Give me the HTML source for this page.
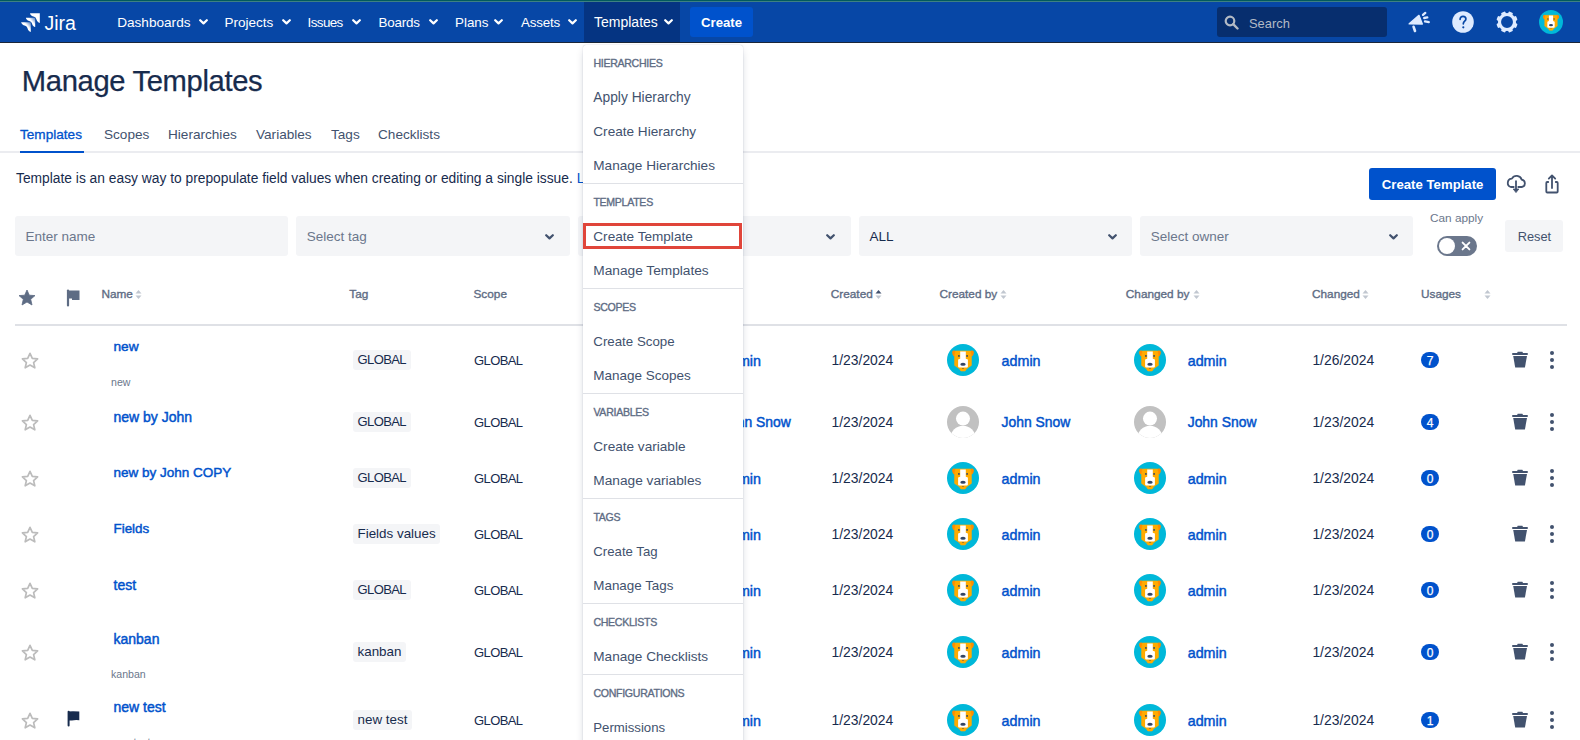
<!DOCTYPE html>
<html><head><meta charset="utf-8"><style>
html,body{margin:0;padding:0;background:#fff;width:1580px;height:740px;overflow:hidden;position:relative}
body{font-family:"Liberation Sans",sans-serif}
.t{position:absolute;white-space:nowrap}
svg{display:block}
</style></head><body>
<div style="position:absolute;left:0px;top:0px;width:1580px;height:1px;background:#025a5e"></div>
<div style="position:absolute;left:0px;top:1px;width:1580px;height:1px;background:#3e8181"></div>
<div style="position:absolute;left:0px;top:2px;width:1580px;height:40px;background:#0747a6"></div>
<div style="position:absolute;left:0px;top:42px;width:1580px;height:1px;background:#1b2638"></div>
<svg style="position:absolute;left:18px;top:8px;" width="30" height="28" viewBox="0 0 30 28"><defs><linearGradient id="lg" x1="1" y1="0" x2="0.35" y2="0.6"><stop offset="0" stop-color="#fff" stop-opacity="0.25"/><stop offset="0.6" stop-color="#fff" stop-opacity="1"/></linearGradient></defs><path d="M12.00,5.20 L21.80,5.20 L21.80,15.00 L20.62,14.61 L19.06,13.04 L18.27,10.88 L17.49,9.51 L16.12,8.73 L13.96,7.94 L12.39,6.38 Z" fill="#fff" stroke-linejoin="round"/><path d="M7.90,9.80 L17.20,9.80 L17.20,19.10 L16.08,18.73 L14.60,17.24 L13.85,15.19 L13.11,13.89 L11.81,13.15 L9.76,12.40 L8.27,10.92 Z" fill="url(#lg)" stroke-linejoin="round"/><path d="M3.10,14.20 L12.80,14.20 L12.80,23.90 L11.64,23.51 L10.08,21.96 L9.31,19.83 L8.53,18.47 L7.17,17.69 L5.04,16.92 L3.49,15.36 Z" fill="url(#lg)" stroke-linejoin="round"/></svg>
<div class="t" style="left:44.5px;top:13.99px;font-size:19.5px;line-height:19.5px;color:#fff;font-weight:400;letter-spacing:0px">Jira</div>
<div style="position:absolute;left:584px;top:2px;width:96px;height:40px;background:#053482"></div>
<div class="t" style="left:117.2px;top:15.69px;font-size:13.6px;line-height:13.6px;color:#fff;font-weight:400;letter-spacing:0px">Dashboards</div>
<svg style="position:absolute;left:199px;top:19px;" width="9" height="6" viewBox="0 0 9 6"><path d="M1.2,1.2 L4.5,4.4 L7.8,1.2" fill="none" stroke="#fff" stroke-width="2.2" stroke-linecap="round" stroke-linejoin="round"/></svg>
<div class="t" style="left:224.5px;top:15.77px;font-size:13.5px;line-height:13.5px;color:#fff;font-weight:400;letter-spacing:0px">Projects</div>
<svg style="position:absolute;left:282px;top:19px;" width="9" height="6" viewBox="0 0 9 6"><path d="M1.2,1.2 L4.5,4.4 L7.8,1.2" fill="none" stroke="#fff" stroke-width="2.2" stroke-linecap="round" stroke-linejoin="round"/></svg>
<div class="t" style="left:307.6px;top:15.86px;font-size:13.4px;line-height:13.4px;color:#fff;font-weight:400;letter-spacing:-0.6px">Issues</div>
<svg style="position:absolute;left:352px;top:19px;" width="9" height="6" viewBox="0 0 9 6"><path d="M1.2,1.2 L4.5,4.4 L7.8,1.2" fill="none" stroke="#fff" stroke-width="2.2" stroke-linecap="round" stroke-linejoin="round"/></svg>
<div class="t" style="left:378.5px;top:15.86px;font-size:13.4px;line-height:13.4px;color:#fff;font-weight:400;letter-spacing:-0.2px">Boards</div>
<svg style="position:absolute;left:429px;top:19px;" width="9" height="6" viewBox="0 0 9 6"><path d="M1.2,1.2 L4.5,4.4 L7.8,1.2" fill="none" stroke="#fff" stroke-width="2.2" stroke-linecap="round" stroke-linejoin="round"/></svg>
<div class="t" style="left:455px;top:15.86px;font-size:13.4px;line-height:13.4px;color:#fff;font-weight:400;letter-spacing:0px">Plans</div>
<svg style="position:absolute;left:494px;top:19px;" width="9" height="6" viewBox="0 0 9 6"><path d="M1.2,1.2 L4.5,4.4 L7.8,1.2" fill="none" stroke="#fff" stroke-width="2.2" stroke-linecap="round" stroke-linejoin="round"/></svg>
<div class="t" style="left:521px;top:15.86px;font-size:13.4px;line-height:13.4px;color:#fff;font-weight:400;letter-spacing:-0.2px">Assets</div>
<svg style="position:absolute;left:568px;top:19px;" width="9" height="6" viewBox="0 0 9 6"><path d="M1.2,1.2 L4.5,4.4 L7.8,1.2" fill="none" stroke="#fff" stroke-width="2.2" stroke-linecap="round" stroke-linejoin="round"/></svg>
<div class="t" style="left:594px;top:15.35px;font-size:14px;line-height:14px;color:#fff;font-weight:400;letter-spacing:0px">Templates</div>
<svg style="position:absolute;left:664px;top:19px;" width="9" height="6" viewBox="0 0 9 6"><path d="M1.2,1.2 L4.5,4.4 L7.8,1.2" fill="none" stroke="#fff" stroke-width="2.2" stroke-linecap="round" stroke-linejoin="round"/></svg>
<div style="position:absolute;left:690px;top:7px;width:63px;height:30px;background:#0052cc;border-radius:3px"></div>
<div class="t" style="left:701px;top:16.03px;font-size:13.2px;line-height:13.2px;color:#fff;font-weight:700;">Create</div>
<div style="position:absolute;left:1217px;top:7px;width:170px;height:30px;background:#072e6e;border-radius:3px"></div>
<svg style="position:absolute;left:1224px;top:15px;" width="16" height="15" viewBox="0 0 16 15"><circle cx="6" cy="6" r="4.3" fill="none" stroke="#b3bac5" stroke-width="2.2"/><path d="M9.2,9.2 L13.5,13.5" stroke="#b3bac5" stroke-width="2.4" stroke-linecap="round"/></svg>
<div class="t" style="left:1249px;top:18.08px;font-size:12.9px;line-height:12.9px;color:#b3bac5;font-weight:400;">Search</div>
<svg style="position:absolute;left:1403px;top:8px;" width="32" height="28" viewBox="0 0 32 28"><path d="M6.2,15.9 L16,7.4 L19.3,16 Z" fill="#deebff" stroke="#deebff" stroke-width="1.4" stroke-linejoin="round"/><path d="M10.6,18.8 L12,23" stroke="#deebff" stroke-width="2.6" stroke-linecap="round"/><path d="M20,6.9 L22.3,4.9 M21.2,10 L24.3,9.4 M22,13.4 L25.8,14.1" stroke="#deebff" stroke-width="2.3" stroke-linecap="round"/></svg>
<svg style="position:absolute;left:1452px;top:11px;" width="22" height="22" viewBox="0 0 22 22"><circle cx="11" cy="11" r="10.8" fill="#deebff"/><path d="M8.1,8.3 C8.1,6.4 9.4,5.3 11,5.3 C12.7,5.3 13.9,6.5 13.9,8 C13.9,10.1 11.3,10.4 11.3,12.8" fill="none" stroke="#0747a6" stroke-width="1.7" stroke-linecap="round"/><circle cx="11.3" cy="16.3" r="1.1" fill="#0747a6"/></svg>
<svg style="position:absolute;left:1496px;top:11px;" width="22" height="22" viewBox="0 0 22 22"><rect x="8.7" y="0.4" width="4.6" height="4" rx="1.1" fill="#deebff" transform="rotate(22.5 11 11)"/><rect x="8.7" y="0.4" width="4.6" height="4" rx="1.1" fill="#deebff" transform="rotate(67.5 11 11)"/><rect x="8.7" y="0.4" width="4.6" height="4" rx="1.1" fill="#deebff" transform="rotate(112.5 11 11)"/><rect x="8.7" y="0.4" width="4.6" height="4" rx="1.1" fill="#deebff" transform="rotate(157.5 11 11)"/><rect x="8.7" y="0.4" width="4.6" height="4" rx="1.1" fill="#deebff" transform="rotate(202.5 11 11)"/><rect x="8.7" y="0.4" width="4.6" height="4" rx="1.1" fill="#deebff" transform="rotate(247.5 11 11)"/><rect x="8.7" y="0.4" width="4.6" height="4" rx="1.1" fill="#deebff" transform="rotate(292.5 11 11)"/><rect x="8.7" y="0.4" width="4.6" height="4" rx="1.1" fill="#deebff" transform="rotate(337.5 11 11)"/><circle cx="11" cy="11" r="7.5" fill="none" stroke="#deebff" stroke-width="3.1"/></svg>
<svg style="position:absolute;left:1539px;top:10px;" width="24" height="24" viewBox="0 0 32 32"><circle cx="16" cy="16" r="16" fill="#00b8d9"/><ellipse cx="7.6" cy="9.4" rx="2.3" ry="3" transform="rotate(-20 7.6 9.4)" fill="#ff8b00"/><ellipse cx="24.4" cy="9.4" rx="2.3" ry="3" transform="rotate(20 24.4 9.4)" fill="#ff8b00"/><path d="M8.6,7 L23.4,7 L24.4,12.2 L24.4,21.4 L19.8,24.6 L18.1,27 L13.9,27 L12.2,24.6 L7.6,21.4 L7.6,12.2 Z" fill="#ffab00" stroke="#ffab00" stroke-width="0.6" stroke-linejoin="round"/><path d="M13.2,7.4 L18.8,7.4 L18.8,14.8 L20.9,15.6 L20.9,22.5 Q20.9,23.6 19.8,23.6 L12.2,23.6 Q11.1,23.6 11.1,22.5 L11.1,15.6 L13.2,14.8 Z" fill="#fff"/><circle cx="11.9" cy="11.9" r="0.95" fill="#344563"/><circle cx="20.1" cy="11.9" r="0.95" fill="#344563"/><ellipse cx="16" cy="20.3" rx="2.7" ry="1.5" fill="#344563"/><path d="M14.8,23.9 L17.2,23.9 L16,24.7 Z" fill="#344563"/></svg>
<div class="t" style="left:21.8px;top:67.28px;font-size:29.2px;line-height:29.2px;color:#172b4d;font-weight:400;-webkit-text-stroke:0.25px #172b4d;letter-spacing:-0.35px">Manage Templates</div>
<div style="position:absolute;left:0px;top:151px;width:1580px;height:2px;background:#ebecf0"></div>
<div style="position:absolute;left:20px;top:151px;width:64px;height:2px;background:#0052cc"></div>
<div class="t" style="left:20px;top:127.89px;font-size:13.6px;line-height:13.6px;color:#0052cc;font-weight:400;-webkit-text-stroke:0.3px #0052cc;">Templates</div>
<div class="t" style="left:104px;top:127.89px;font-size:13.6px;line-height:13.6px;color:#42526e;font-weight:400;">Scopes</div>
<div class="t" style="left:168px;top:127.89px;font-size:13.6px;line-height:13.6px;color:#42526e;font-weight:400;">Hierarchies</div>
<div class="t" style="left:256px;top:127.89px;font-size:13.6px;line-height:13.6px;color:#42526e;font-weight:400;">Variables</div>
<div class="t" style="left:331px;top:127.89px;font-size:13.6px;line-height:13.6px;color:#42526e;font-weight:400;">Tags</div>
<div class="t" style="left:378px;top:127.89px;font-size:13.6px;line-height:13.6px;color:#42526e;font-weight:400;">Checklists</div>
<div class="t" style="left:16px;top:172.12px;font-size:13.8px;line-height:13.8px;color:#172b4d;font-weight:400;">Template is an easy way to prepopulate field values when creating or editing a single issue. <span style="color:#0052cc">Learn more</span></div>
<div style="position:absolute;left:1369px;top:168px;width:127px;height:32px;background:#0052cc;border-radius:3px"></div>
<div class="t" style="left:1381.8px;top:178.43px;font-size:13.2px;line-height:13.2px;color:#fff;font-weight:700;">Create Template</div>
<svg style="position:absolute;left:1500px;top:168px;" width="30" height="28" viewBox="0 0 30 28"><path d="M13.7,19 L10.8,19 A4.3,4.3 0 0 1 11.9,10.6 A5.4,5.4 0 0 1 21.7,11.6 A3.75,3.75 0 0 1 21.8,19 L18.3,19" fill="none" stroke="#42526e" stroke-width="1.8" stroke-linecap="round" stroke-linejoin="round"/><path d="M16,13.2 L16,21.5" stroke="#42526e" stroke-width="1.8" stroke-linecap="round"/><path d="M13.2,21 L16,24.6 L18.8,21 Z" fill="#42526e" stroke="#42526e" stroke-width="0.8" stroke-linejoin="round"/></svg>
<svg style="position:absolute;left:1543px;top:173px;" width="18" height="21" viewBox="0 0 18 21"><path d="M9,2.5 L9,15 M5.8,5.6 L9,2.4 L12.2,5.6" fill="none" stroke="#42526e" stroke-width="1.8" stroke-linecap="round" stroke-linejoin="round"/><path d="M5.2,9 L4.2,9 Q3.3,9 3.3,10 L3.3,18.5 Q3.3,19.5 4.3,19.5 L13.7,19.5 Q14.7,19.5 14.7,18.5 L14.7,10 Q14.7,9 13.7,9 L12.8,9" fill="none" stroke="#42526e" stroke-width="1.8" stroke-linecap="round"/></svg>
<div style="position:absolute;left:15.0px;top:216px;width:273.3px;height:40px;background:#f4f5f7;border-radius:3px"></div>
<div class="t" style="left:25.5px;top:230.17px;font-size:13.5px;line-height:13.5px;color:#6b778c;font-weight:400;">Enter name</div>
<div style="position:absolute;left:296.3px;top:216px;width:273.3px;height:40px;background:#f4f5f7;border-radius:3px"></div>
<div class="t" style="left:306.8px;top:230.17px;font-size:13.5px;line-height:13.5px;color:#6b778c;font-weight:400;">Select tag</div>
<svg style="position:absolute;left:544.9px;top:233.5px;" width="9" height="6" viewBox="0 0 9 6"><path d="M1.2,1.2 L4.5,4.4 L7.8,1.2" fill="none" stroke="#42526e" stroke-width="2.2" stroke-linecap="round" stroke-linejoin="round"/></svg>
<div style="position:absolute;left:577.6px;top:216px;width:273.3px;height:40px;background:#f4f5f7;border-radius:3px"></div>
<svg style="position:absolute;left:826.2px;top:233.5px;" width="9" height="6" viewBox="0 0 9 6"><path d="M1.2,1.2 L4.5,4.4 L7.8,1.2" fill="none" stroke="#42526e" stroke-width="2.2" stroke-linecap="round" stroke-linejoin="round"/></svg>
<div style="position:absolute;left:858.9px;top:216px;width:273.3px;height:40px;background:#f4f5f7;border-radius:3px"></div>
<div class="t" style="left:869.4px;top:230.17px;font-size:13.5px;line-height:13.5px;color:#172b4d;font-weight:400;">ALL</div>
<svg style="position:absolute;left:1107.5px;top:233.5px;" width="9" height="6" viewBox="0 0 9 6"><path d="M1.2,1.2 L4.5,4.4 L7.8,1.2" fill="none" stroke="#42526e" stroke-width="2.2" stroke-linecap="round" stroke-linejoin="round"/></svg>
<div style="position:absolute;left:1140.2px;top:216px;width:273.3px;height:40px;background:#f4f5f7;border-radius:3px"></div>
<div class="t" style="left:1150.7px;top:230.17px;font-size:13.5px;line-height:13.5px;color:#6b778c;font-weight:400;">Select owner</div>
<svg style="position:absolute;left:1388.8px;top:233.5px;" width="9" height="6" viewBox="0 0 9 6"><path d="M1.2,1.2 L4.5,4.4 L7.8,1.2" fill="none" stroke="#42526e" stroke-width="2.2" stroke-linecap="round" stroke-linejoin="round"/></svg>
<div class="t" style="left:1430px;top:213.21px;font-size:11.8px;line-height:11.8px;color:#6b778c;font-weight:400;">Can apply</div>
<div style="position:absolute;left:1437px;top:236px;width:40px;height:20px;background:#6b778c;border-radius:10px"></div>
<div style="position:absolute;left:1439px;top:238px;width:16px;height:16px;background:#fff;border-radius:8px"></div>
<svg style="position:absolute;left:1461px;top:241px;" width="10" height="10" viewBox="0 0 10 10"><path d="M1.6,1.6 L8.4,8.4 M8.4,1.6 L1.6,8.4" stroke="#fff" stroke-width="1.9" stroke-linecap="round"/></svg>
<div style="position:absolute;left:1505px;top:220px;width:58px;height:32px;background:#f4f5f7;border-radius:3px"></div>
<div class="t" style="left:1517.7px;top:231.06px;font-size:12.8px;line-height:12.8px;color:#42526e;font-weight:400;">Reset</div>
<svg style="position:absolute;left:18px;top:289px;" width="18" height="17" viewBox="0 0 18 17"><path d="M9,1 L11.3,6.2 L17,6.6 L12.7,10.3 L14,16 L9,13 L4,16 L5.3,10.3 L1,6.6 L6.7,6.2 Z" fill="#5e6c84" stroke="#5e6c84" stroke-width="0.8" stroke-linejoin="round"/></svg>
<svg style="position:absolute;left:66px;top:289px;" width="15" height="18" viewBox="0 0 15 18"><path d="M2,1.5 L2,16.5" stroke="#5e6c84" stroke-width="2.2" stroke-linecap="round"/><path d="M2,1.5 L13.5,1.5 L13.5,11 L6,11 L6,9.5 L2,9.5 Z" fill="#5e6c84"/></svg>
<div class="t" style="left:101.4px;top:289.41px;font-size:11.8px;line-height:11.8px;color:#5e6c84;font-weight:400;-webkit-text-stroke:0.35px #5e6c84;">Name</div>
<svg style="position:absolute;left:135px;top:288.5px;" width="7" height="11" viewBox="0 0 7 11"><path d="M0.5,4.5 L3.5,1 L6.5,4.5 Z" fill="#c1c7d0"/><path d="M0.5,6.5 L3.5,10 L6.5,6.5 Z" fill="#c1c7d0"/></svg>
<div class="t" style="left:349.3px;top:289.41px;font-size:11.8px;line-height:11.8px;color:#5e6c84;font-weight:400;-webkit-text-stroke:0.35px #5e6c84;">Tag</div>
<div class="t" style="left:473.5px;top:289.41px;font-size:11.8px;line-height:11.8px;color:#5e6c84;font-weight:400;-webkit-text-stroke:0.35px #5e6c84;">Scope</div>
<div class="t" style="left:830.8px;top:289.41px;font-size:11.8px;line-height:11.8px;color:#5e6c84;font-weight:400;-webkit-text-stroke:0.35px #5e6c84;">Created</div>
<svg style="position:absolute;left:875px;top:288.5px;" width="7" height="11" viewBox="0 0 7 11"><path d="M0.5,4.5 L3.5,1 L6.5,4.5 Z" fill="#42526e"/><path d="M0.5,6.5 L3.5,10 L6.5,6.5 Z" fill="#c1c7d0"/></svg>
<div class="t" style="left:939.5px;top:289.41px;font-size:11.8px;line-height:11.8px;color:#5e6c84;font-weight:400;-webkit-text-stroke:0.35px #5e6c84;">Created by</div>
<svg style="position:absolute;left:1000px;top:288.5px;" width="7" height="11" viewBox="0 0 7 11"><path d="M0.5,4.5 L3.5,1 L6.5,4.5 Z" fill="#c1c7d0"/><path d="M0.5,6.5 L3.5,10 L6.5,6.5 Z" fill="#c1c7d0"/></svg>
<div class="t" style="left:1125.8px;top:289.41px;font-size:11.8px;line-height:11.8px;color:#5e6c84;font-weight:400;-webkit-text-stroke:0.35px #5e6c84;">Changed by</div>
<svg style="position:absolute;left:1193px;top:288.5px;" width="7" height="11" viewBox="0 0 7 11"><path d="M0.5,4.5 L3.5,1 L6.5,4.5 Z" fill="#c1c7d0"/><path d="M0.5,6.5 L3.5,10 L6.5,6.5 Z" fill="#c1c7d0"/></svg>
<div class="t" style="left:1312px;top:289.41px;font-size:11.8px;line-height:11.8px;color:#5e6c84;font-weight:400;-webkit-text-stroke:0.35px #5e6c84;">Changed</div>
<svg style="position:absolute;left:1362px;top:288.5px;" width="7" height="11" viewBox="0 0 7 11"><path d="M0.5,4.5 L3.5,1 L6.5,4.5 Z" fill="#c1c7d0"/><path d="M0.5,6.5 L3.5,10 L6.5,6.5 Z" fill="#c1c7d0"/></svg>
<div class="t" style="left:1421px;top:289.41px;font-size:11.8px;line-height:11.8px;color:#5e6c84;font-weight:400;-webkit-text-stroke:0.35px #5e6c84;">Usages</div>
<svg style="position:absolute;left:1484px;top:288.5px;" width="7" height="11" viewBox="0 0 7 11"><path d="M0.5,4.5 L3.5,1 L6.5,4.5 Z" fill="#c1c7d0"/><path d="M0.5,6.5 L3.5,10 L6.5,6.5 Z" fill="#c1c7d0"/></svg>
<div style="position:absolute;left:15px;top:324px;width:1552px;height:2px;background:#dfe1e6"></div>
<svg style="position:absolute;left:21px;top:351.5px;" width="18" height="17" viewBox="0 0 18 17"><path d="M9,1.3 L11.3,6.3 L16.6,6.9 L12.6,10.6 L13.8,15.8 L9,13.1 L4.2,15.8 L5.4,10.6 L1.4,6.9 L6.7,6.3 Z" fill="none" stroke="#bcbcbc" stroke-width="1.7" stroke-linejoin="round"/></svg>
<div class="t" style="left:113.5px;top:340.00px;font-size:13.7px;line-height:13.7px;color:#0052cc;font-weight:400;-webkit-text-stroke:0.45px #0052cc;">new</div>
<div class="t" style="left:111px;top:377.33px;font-size:10.6px;line-height:10.6px;color:#6b778c;font-weight:400;">new</div>
<div style="position:absolute;left:353px;top:350px;width:57.6px;height:20px;background:#f4f5f7;border-radius:3px"></div>
<div class="t" style="left:357.5px;top:353.40px;font-size:13.0px;line-height:13.0px;color:#172b4d;font-weight:400;letter-spacing:-0.6px">GLOBAL</div>
<div class="t" style="left:474px;top:354.30px;font-size:13.0px;line-height:13.0px;color:#172b4d;font-weight:400;letter-spacing:-0.6px">GLOBAL</div>
<div class="t" style="left:722px;top:353.50px;font-size:14.3px;line-height:14.3px;color:#0052cc;font-weight:400;-webkit-text-stroke:0.45px #0052cc;">admin</div>
<div class="t" style="left:831.5px;top:353.83px;font-size:13.9px;line-height:13.9px;color:#172b4d;font-weight:400;">1/23/2024</div>
<svg style="position:absolute;left:947px;top:344px;" width="32" height="32" viewBox="0 0 32 32"><circle cx="16" cy="16" r="16" fill="#00b8d9"/><ellipse cx="7.6" cy="9.4" rx="2.3" ry="3" transform="rotate(-20 7.6 9.4)" fill="#ff8b00"/><ellipse cx="24.4" cy="9.4" rx="2.3" ry="3" transform="rotate(20 24.4 9.4)" fill="#ff8b00"/><path d="M8.6,7 L23.4,7 L24.4,12.2 L24.4,21.4 L19.8,24.6 L18.1,27 L13.9,27 L12.2,24.6 L7.6,21.4 L7.6,12.2 Z" fill="#ffab00" stroke="#ffab00" stroke-width="0.6" stroke-linejoin="round"/><path d="M13.2,7.4 L18.8,7.4 L18.8,14.8 L20.9,15.6 L20.9,22.5 Q20.9,23.6 19.8,23.6 L12.2,23.6 Q11.1,23.6 11.1,22.5 L11.1,15.6 L13.2,14.8 Z" fill="#fff"/><circle cx="11.9" cy="11.9" r="0.95" fill="#344563"/><circle cx="20.1" cy="11.9" r="0.95" fill="#344563"/><ellipse cx="16" cy="20.3" rx="2.7" ry="1.5" fill="#344563"/><path d="M14.8,23.9 L17.2,23.9 L16,24.7 Z" fill="#344563"/></svg>
<svg style="position:absolute;left:1134px;top:344px;" width="32" height="32" viewBox="0 0 32 32"><circle cx="16" cy="16" r="16" fill="#00b8d9"/><ellipse cx="7.6" cy="9.4" rx="2.3" ry="3" transform="rotate(-20 7.6 9.4)" fill="#ff8b00"/><ellipse cx="24.4" cy="9.4" rx="2.3" ry="3" transform="rotate(20 24.4 9.4)" fill="#ff8b00"/><path d="M8.6,7 L23.4,7 L24.4,12.2 L24.4,21.4 L19.8,24.6 L18.1,27 L13.9,27 L12.2,24.6 L7.6,21.4 L7.6,12.2 Z" fill="#ffab00" stroke="#ffab00" stroke-width="0.6" stroke-linejoin="round"/><path d="M13.2,7.4 L18.8,7.4 L18.8,14.8 L20.9,15.6 L20.9,22.5 Q20.9,23.6 19.8,23.6 L12.2,23.6 Q11.1,23.6 11.1,22.5 L11.1,15.6 L13.2,14.8 Z" fill="#fff"/><circle cx="11.9" cy="11.9" r="0.95" fill="#344563"/><circle cx="20.1" cy="11.9" r="0.95" fill="#344563"/><ellipse cx="16" cy="20.3" rx="2.7" ry="1.5" fill="#344563"/><path d="M14.8,23.9 L17.2,23.9 L16,24.7 Z" fill="#344563"/></svg>
<div class="t" style="left:1001.6px;top:353.50px;font-size:14.3px;line-height:14.3px;color:#0052cc;font-weight:400;-webkit-text-stroke:0.45px #0052cc;">admin</div>
<div class="t" style="left:1187.7px;top:353.50px;font-size:14.3px;line-height:14.3px;color:#0052cc;font-weight:400;-webkit-text-stroke:0.45px #0052cc;">admin</div>
<div class="t" style="left:1312.4px;top:353.83px;font-size:13.9px;line-height:13.9px;color:#172b4d;font-weight:400;">1/26/2024</div>
<div style="position:absolute;left:1421px;top:352px;width:18px;height:16px;background:#0052cc;border-radius:8px"></div>
<div class="t" style="left:1421px;top:353px;width:18px;height:16px;line-height:16px;text-align:center;font-size:12px;font-weight:400;-webkit-text-stroke:0.25px #fff;color:#fff">7</div>
<svg style="position:absolute;left:1511px;top:351px;" width="18" height="18" viewBox="0 0 18 18"><rect x="1.1" y="2" width="15.8" height="1.9" rx="0.7" fill="#42526e"/><rect x="6.3" y="0.8" width="5.5" height="2" rx="0.6" fill="#42526e"/><path d="M2.2,5.1 L16,5.1 L13.9,16.6 L4.2,16.6 Z" fill="#42526e"/></svg>
<svg style="position:absolute;left:1549px;top:350px;" width="6" height="20" viewBox="0 0 6 20"><circle cx="3" cy="3" r="2" fill="#42526e"/><circle cx="3" cy="10" r="2" fill="#42526e"/><circle cx="3" cy="17" r="2" fill="#42526e"/></svg>
<svg style="position:absolute;left:21px;top:413.5px;" width="18" height="17" viewBox="0 0 18 17"><path d="M9,1.3 L11.3,6.3 L16.6,6.9 L12.6,10.6 L13.8,15.8 L9,13.1 L4.2,15.8 L5.4,10.6 L1.4,6.9 L6.7,6.3 Z" fill="none" stroke="#bcbcbc" stroke-width="1.7" stroke-linejoin="round"/></svg>
<div class="t" style="left:113.5px;top:409.75px;font-size:14px;line-height:14px;color:#0052cc;font-weight:400;-webkit-text-stroke:0.45px #0052cc;">new by John</div>
<div style="position:absolute;left:353px;top:412px;width:57.6px;height:20px;background:#f4f5f7;border-radius:3px"></div>
<div class="t" style="left:357.5px;top:415.40px;font-size:13.0px;line-height:13.0px;color:#172b4d;font-weight:400;letter-spacing:-0.6px">GLOBAL</div>
<div class="t" style="left:474px;top:416.30px;font-size:13.0px;line-height:13.0px;color:#172b4d;font-weight:400;letter-spacing:-0.6px">GLOBAL</div>
<div class="t" style="left:722px;top:415.83px;font-size:13.9px;line-height:13.9px;color:#0052cc;font-weight:400;-webkit-text-stroke:0.45px #0052cc;">John Snow</div>
<div class="t" style="left:831.5px;top:415.83px;font-size:13.9px;line-height:13.9px;color:#172b4d;font-weight:400;">1/23/2024</div>
<svg style="position:absolute;left:947px;top:406px;" width="32" height="32" viewBox="0 0 32 32"><defs><clipPath id="cp1"><circle cx="16" cy="16" r="16"/></clipPath></defs><circle cx="16" cy="16" r="16" fill="#c1c1c1"/><g clip-path="url(#cp1)"><circle cx="16" cy="12.6" r="7" fill="#fff"/><ellipse cx="16" cy="32" rx="12.5" ry="12.3" fill="#fff"/></g></svg>
<svg style="position:absolute;left:1134px;top:406px;" width="32" height="32" viewBox="0 0 32 32"><defs><clipPath id="cp2"><circle cx="16" cy="16" r="16"/></clipPath></defs><circle cx="16" cy="16" r="16" fill="#c1c1c1"/><g clip-path="url(#cp2)"><circle cx="16" cy="12.6" r="7" fill="#fff"/><ellipse cx="16" cy="32" rx="12.5" ry="12.3" fill="#fff"/></g></svg>
<div class="t" style="left:1001.6px;top:415.83px;font-size:13.9px;line-height:13.9px;color:#0052cc;font-weight:400;-webkit-text-stroke:0.45px #0052cc;">John Snow</div>
<div class="t" style="left:1187.7px;top:415.83px;font-size:13.9px;line-height:13.9px;color:#0052cc;font-weight:400;-webkit-text-stroke:0.45px #0052cc;">John Snow</div>
<div class="t" style="left:1312.4px;top:415.83px;font-size:13.9px;line-height:13.9px;color:#172b4d;font-weight:400;">1/23/2024</div>
<div style="position:absolute;left:1421px;top:414px;width:18px;height:16px;background:#0052cc;border-radius:8px"></div>
<div class="t" style="left:1421px;top:415px;width:18px;height:16px;line-height:16px;text-align:center;font-size:12px;font-weight:400;-webkit-text-stroke:0.25px #fff;color:#fff">4</div>
<svg style="position:absolute;left:1511px;top:413px;" width="18" height="18" viewBox="0 0 18 18"><rect x="1.1" y="2" width="15.8" height="1.9" rx="0.7" fill="#42526e"/><rect x="6.3" y="0.8" width="5.5" height="2" rx="0.6" fill="#42526e"/><path d="M2.2,5.1 L16,5.1 L13.9,16.6 L4.2,16.6 Z" fill="#42526e"/></svg>
<svg style="position:absolute;left:1549px;top:412px;" width="6" height="20" viewBox="0 0 6 20"><circle cx="3" cy="3" r="2" fill="#42526e"/><circle cx="3" cy="10" r="2" fill="#42526e"/><circle cx="3" cy="17" r="2" fill="#42526e"/></svg>
<svg style="position:absolute;left:21px;top:469.5px;" width="18" height="17" viewBox="0 0 18 17"><path d="M9,1.3 L11.3,6.3 L16.6,6.9 L12.6,10.6 L13.8,15.8 L9,13.1 L4.2,15.8 L5.4,10.6 L1.4,6.9 L6.7,6.3 Z" fill="none" stroke="#bcbcbc" stroke-width="1.7" stroke-linejoin="round"/></svg>
<div class="t" style="left:113.5px;top:466.17px;font-size:13.5px;line-height:13.5px;color:#0052cc;font-weight:400;-webkit-text-stroke:0.45px #0052cc;">new by John COPY</div>
<div style="position:absolute;left:353px;top:468px;width:57.6px;height:20px;background:#f4f5f7;border-radius:3px"></div>
<div class="t" style="left:357.5px;top:471.40px;font-size:13.0px;line-height:13.0px;color:#172b4d;font-weight:400;letter-spacing:-0.6px">GLOBAL</div>
<div class="t" style="left:474px;top:472.30px;font-size:13.0px;line-height:13.0px;color:#172b4d;font-weight:400;letter-spacing:-0.6px">GLOBAL</div>
<div class="t" style="left:722px;top:471.50px;font-size:14.3px;line-height:14.3px;color:#0052cc;font-weight:400;-webkit-text-stroke:0.45px #0052cc;">admin</div>
<div class="t" style="left:831.5px;top:471.83px;font-size:13.9px;line-height:13.9px;color:#172b4d;font-weight:400;">1/23/2024</div>
<svg style="position:absolute;left:947px;top:462px;" width="32" height="32" viewBox="0 0 32 32"><circle cx="16" cy="16" r="16" fill="#00b8d9"/><ellipse cx="7.6" cy="9.4" rx="2.3" ry="3" transform="rotate(-20 7.6 9.4)" fill="#ff8b00"/><ellipse cx="24.4" cy="9.4" rx="2.3" ry="3" transform="rotate(20 24.4 9.4)" fill="#ff8b00"/><path d="M8.6,7 L23.4,7 L24.4,12.2 L24.4,21.4 L19.8,24.6 L18.1,27 L13.9,27 L12.2,24.6 L7.6,21.4 L7.6,12.2 Z" fill="#ffab00" stroke="#ffab00" stroke-width="0.6" stroke-linejoin="round"/><path d="M13.2,7.4 L18.8,7.4 L18.8,14.8 L20.9,15.6 L20.9,22.5 Q20.9,23.6 19.8,23.6 L12.2,23.6 Q11.1,23.6 11.1,22.5 L11.1,15.6 L13.2,14.8 Z" fill="#fff"/><circle cx="11.9" cy="11.9" r="0.95" fill="#344563"/><circle cx="20.1" cy="11.9" r="0.95" fill="#344563"/><ellipse cx="16" cy="20.3" rx="2.7" ry="1.5" fill="#344563"/><path d="M14.8,23.9 L17.2,23.9 L16,24.7 Z" fill="#344563"/></svg>
<svg style="position:absolute;left:1134px;top:462px;" width="32" height="32" viewBox="0 0 32 32"><circle cx="16" cy="16" r="16" fill="#00b8d9"/><ellipse cx="7.6" cy="9.4" rx="2.3" ry="3" transform="rotate(-20 7.6 9.4)" fill="#ff8b00"/><ellipse cx="24.4" cy="9.4" rx="2.3" ry="3" transform="rotate(20 24.4 9.4)" fill="#ff8b00"/><path d="M8.6,7 L23.4,7 L24.4,12.2 L24.4,21.4 L19.8,24.6 L18.1,27 L13.9,27 L12.2,24.6 L7.6,21.4 L7.6,12.2 Z" fill="#ffab00" stroke="#ffab00" stroke-width="0.6" stroke-linejoin="round"/><path d="M13.2,7.4 L18.8,7.4 L18.8,14.8 L20.9,15.6 L20.9,22.5 Q20.9,23.6 19.8,23.6 L12.2,23.6 Q11.1,23.6 11.1,22.5 L11.1,15.6 L13.2,14.8 Z" fill="#fff"/><circle cx="11.9" cy="11.9" r="0.95" fill="#344563"/><circle cx="20.1" cy="11.9" r="0.95" fill="#344563"/><ellipse cx="16" cy="20.3" rx="2.7" ry="1.5" fill="#344563"/><path d="M14.8,23.9 L17.2,23.9 L16,24.7 Z" fill="#344563"/></svg>
<div class="t" style="left:1001.6px;top:471.50px;font-size:14.3px;line-height:14.3px;color:#0052cc;font-weight:400;-webkit-text-stroke:0.45px #0052cc;">admin</div>
<div class="t" style="left:1187.7px;top:471.50px;font-size:14.3px;line-height:14.3px;color:#0052cc;font-weight:400;-webkit-text-stroke:0.45px #0052cc;">admin</div>
<div class="t" style="left:1312.4px;top:471.83px;font-size:13.9px;line-height:13.9px;color:#172b4d;font-weight:400;">1/23/2024</div>
<div style="position:absolute;left:1421px;top:470px;width:18px;height:16px;background:#0052cc;border-radius:8px"></div>
<div class="t" style="left:1421px;top:471px;width:18px;height:16px;line-height:16px;text-align:center;font-size:12px;font-weight:400;-webkit-text-stroke:0.25px #fff;color:#fff">0</div>
<svg style="position:absolute;left:1511px;top:469px;" width="18" height="18" viewBox="0 0 18 18"><rect x="1.1" y="2" width="15.8" height="1.9" rx="0.7" fill="#42526e"/><rect x="6.3" y="0.8" width="5.5" height="2" rx="0.6" fill="#42526e"/><path d="M2.2,5.1 L16,5.1 L13.9,16.6 L4.2,16.6 Z" fill="#42526e"/></svg>
<svg style="position:absolute;left:1549px;top:468px;" width="6" height="20" viewBox="0 0 6 20"><circle cx="3" cy="3" r="2" fill="#42526e"/><circle cx="3" cy="10" r="2" fill="#42526e"/><circle cx="3" cy="17" r="2" fill="#42526e"/></svg>
<svg style="position:absolute;left:21px;top:525.5px;" width="18" height="17" viewBox="0 0 18 17"><path d="M9,1.3 L11.3,6.3 L16.6,6.9 L12.6,10.6 L13.8,15.8 L9,13.1 L4.2,15.8 L5.4,10.6 L1.4,6.9 L6.7,6.3 Z" fill="none" stroke="#bcbcbc" stroke-width="1.7" stroke-linejoin="round"/></svg>
<div class="t" style="left:113.5px;top:522.26px;font-size:13.4px;line-height:13.4px;color:#0052cc;font-weight:400;-webkit-text-stroke:0.45px #0052cc;">Fields</div>
<div style="position:absolute;left:353px;top:524px;width:86.8px;height:20px;background:#f4f5f7;border-radius:3px"></div>
<div class="t" style="left:357.5px;top:527.06px;font-size:13.4px;line-height:13.4px;color:#172b4d;font-weight:400;letter-spacing:0px">Fields values</div>
<div class="t" style="left:474px;top:528.30px;font-size:13.0px;line-height:13.0px;color:#172b4d;font-weight:400;letter-spacing:-0.6px">GLOBAL</div>
<div class="t" style="left:722px;top:527.50px;font-size:14.3px;line-height:14.3px;color:#0052cc;font-weight:400;-webkit-text-stroke:0.45px #0052cc;">admin</div>
<div class="t" style="left:831.5px;top:527.83px;font-size:13.9px;line-height:13.9px;color:#172b4d;font-weight:400;">1/23/2024</div>
<svg style="position:absolute;left:947px;top:518px;" width="32" height="32" viewBox="0 0 32 32"><circle cx="16" cy="16" r="16" fill="#00b8d9"/><ellipse cx="7.6" cy="9.4" rx="2.3" ry="3" transform="rotate(-20 7.6 9.4)" fill="#ff8b00"/><ellipse cx="24.4" cy="9.4" rx="2.3" ry="3" transform="rotate(20 24.4 9.4)" fill="#ff8b00"/><path d="M8.6,7 L23.4,7 L24.4,12.2 L24.4,21.4 L19.8,24.6 L18.1,27 L13.9,27 L12.2,24.6 L7.6,21.4 L7.6,12.2 Z" fill="#ffab00" stroke="#ffab00" stroke-width="0.6" stroke-linejoin="round"/><path d="M13.2,7.4 L18.8,7.4 L18.8,14.8 L20.9,15.6 L20.9,22.5 Q20.9,23.6 19.8,23.6 L12.2,23.6 Q11.1,23.6 11.1,22.5 L11.1,15.6 L13.2,14.8 Z" fill="#fff"/><circle cx="11.9" cy="11.9" r="0.95" fill="#344563"/><circle cx="20.1" cy="11.9" r="0.95" fill="#344563"/><ellipse cx="16" cy="20.3" rx="2.7" ry="1.5" fill="#344563"/><path d="M14.8,23.9 L17.2,23.9 L16,24.7 Z" fill="#344563"/></svg>
<svg style="position:absolute;left:1134px;top:518px;" width="32" height="32" viewBox="0 0 32 32"><circle cx="16" cy="16" r="16" fill="#00b8d9"/><ellipse cx="7.6" cy="9.4" rx="2.3" ry="3" transform="rotate(-20 7.6 9.4)" fill="#ff8b00"/><ellipse cx="24.4" cy="9.4" rx="2.3" ry="3" transform="rotate(20 24.4 9.4)" fill="#ff8b00"/><path d="M8.6,7 L23.4,7 L24.4,12.2 L24.4,21.4 L19.8,24.6 L18.1,27 L13.9,27 L12.2,24.6 L7.6,21.4 L7.6,12.2 Z" fill="#ffab00" stroke="#ffab00" stroke-width="0.6" stroke-linejoin="round"/><path d="M13.2,7.4 L18.8,7.4 L18.8,14.8 L20.9,15.6 L20.9,22.5 Q20.9,23.6 19.8,23.6 L12.2,23.6 Q11.1,23.6 11.1,22.5 L11.1,15.6 L13.2,14.8 Z" fill="#fff"/><circle cx="11.9" cy="11.9" r="0.95" fill="#344563"/><circle cx="20.1" cy="11.9" r="0.95" fill="#344563"/><ellipse cx="16" cy="20.3" rx="2.7" ry="1.5" fill="#344563"/><path d="M14.8,23.9 L17.2,23.9 L16,24.7 Z" fill="#344563"/></svg>
<div class="t" style="left:1001.6px;top:527.50px;font-size:14.3px;line-height:14.3px;color:#0052cc;font-weight:400;-webkit-text-stroke:0.45px #0052cc;">admin</div>
<div class="t" style="left:1187.7px;top:527.50px;font-size:14.3px;line-height:14.3px;color:#0052cc;font-weight:400;-webkit-text-stroke:0.45px #0052cc;">admin</div>
<div class="t" style="left:1312.4px;top:527.83px;font-size:13.9px;line-height:13.9px;color:#172b4d;font-weight:400;">1/23/2024</div>
<div style="position:absolute;left:1421px;top:526px;width:18px;height:16px;background:#0052cc;border-radius:8px"></div>
<div class="t" style="left:1421px;top:527px;width:18px;height:16px;line-height:16px;text-align:center;font-size:12px;font-weight:400;-webkit-text-stroke:0.25px #fff;color:#fff">0</div>
<svg style="position:absolute;left:1511px;top:525px;" width="18" height="18" viewBox="0 0 18 18"><rect x="1.1" y="2" width="15.8" height="1.9" rx="0.7" fill="#42526e"/><rect x="6.3" y="0.8" width="5.5" height="2" rx="0.6" fill="#42526e"/><path d="M2.2,5.1 L16,5.1 L13.9,16.6 L4.2,16.6 Z" fill="#42526e"/></svg>
<svg style="position:absolute;left:1549px;top:524px;" width="6" height="20" viewBox="0 0 6 20"><circle cx="3" cy="3" r="2" fill="#42526e"/><circle cx="3" cy="10" r="2" fill="#42526e"/><circle cx="3" cy="17" r="2" fill="#42526e"/></svg>
<svg style="position:absolute;left:21px;top:581.5px;" width="18" height="17" viewBox="0 0 18 17"><path d="M9,1.3 L11.3,6.3 L16.6,6.9 L12.6,10.6 L13.8,15.8 L9,13.1 L4.2,15.8 L5.4,10.6 L1.4,6.9 L6.7,6.3 Z" fill="none" stroke="#bcbcbc" stroke-width="1.7" stroke-linejoin="round"/></svg>
<div class="t" style="left:113.5px;top:577.75px;font-size:14px;line-height:14px;color:#0052cc;font-weight:400;-webkit-text-stroke:0.45px #0052cc;">test</div>
<div style="position:absolute;left:353px;top:580px;width:57.6px;height:20px;background:#f4f5f7;border-radius:3px"></div>
<div class="t" style="left:357.5px;top:583.40px;font-size:13.0px;line-height:13.0px;color:#172b4d;font-weight:400;letter-spacing:-0.6px">GLOBAL</div>
<div class="t" style="left:474px;top:584.30px;font-size:13.0px;line-height:13.0px;color:#172b4d;font-weight:400;letter-spacing:-0.6px">GLOBAL</div>
<div class="t" style="left:722px;top:583.50px;font-size:14.3px;line-height:14.3px;color:#0052cc;font-weight:400;-webkit-text-stroke:0.45px #0052cc;">admin</div>
<div class="t" style="left:831.5px;top:583.83px;font-size:13.9px;line-height:13.9px;color:#172b4d;font-weight:400;">1/23/2024</div>
<svg style="position:absolute;left:947px;top:574px;" width="32" height="32" viewBox="0 0 32 32"><circle cx="16" cy="16" r="16" fill="#00b8d9"/><ellipse cx="7.6" cy="9.4" rx="2.3" ry="3" transform="rotate(-20 7.6 9.4)" fill="#ff8b00"/><ellipse cx="24.4" cy="9.4" rx="2.3" ry="3" transform="rotate(20 24.4 9.4)" fill="#ff8b00"/><path d="M8.6,7 L23.4,7 L24.4,12.2 L24.4,21.4 L19.8,24.6 L18.1,27 L13.9,27 L12.2,24.6 L7.6,21.4 L7.6,12.2 Z" fill="#ffab00" stroke="#ffab00" stroke-width="0.6" stroke-linejoin="round"/><path d="M13.2,7.4 L18.8,7.4 L18.8,14.8 L20.9,15.6 L20.9,22.5 Q20.9,23.6 19.8,23.6 L12.2,23.6 Q11.1,23.6 11.1,22.5 L11.1,15.6 L13.2,14.8 Z" fill="#fff"/><circle cx="11.9" cy="11.9" r="0.95" fill="#344563"/><circle cx="20.1" cy="11.9" r="0.95" fill="#344563"/><ellipse cx="16" cy="20.3" rx="2.7" ry="1.5" fill="#344563"/><path d="M14.8,23.9 L17.2,23.9 L16,24.7 Z" fill="#344563"/></svg>
<svg style="position:absolute;left:1134px;top:574px;" width="32" height="32" viewBox="0 0 32 32"><circle cx="16" cy="16" r="16" fill="#00b8d9"/><ellipse cx="7.6" cy="9.4" rx="2.3" ry="3" transform="rotate(-20 7.6 9.4)" fill="#ff8b00"/><ellipse cx="24.4" cy="9.4" rx="2.3" ry="3" transform="rotate(20 24.4 9.4)" fill="#ff8b00"/><path d="M8.6,7 L23.4,7 L24.4,12.2 L24.4,21.4 L19.8,24.6 L18.1,27 L13.9,27 L12.2,24.6 L7.6,21.4 L7.6,12.2 Z" fill="#ffab00" stroke="#ffab00" stroke-width="0.6" stroke-linejoin="round"/><path d="M13.2,7.4 L18.8,7.4 L18.8,14.8 L20.9,15.6 L20.9,22.5 Q20.9,23.6 19.8,23.6 L12.2,23.6 Q11.1,23.6 11.1,22.5 L11.1,15.6 L13.2,14.8 Z" fill="#fff"/><circle cx="11.9" cy="11.9" r="0.95" fill="#344563"/><circle cx="20.1" cy="11.9" r="0.95" fill="#344563"/><ellipse cx="16" cy="20.3" rx="2.7" ry="1.5" fill="#344563"/><path d="M14.8,23.9 L17.2,23.9 L16,24.7 Z" fill="#344563"/></svg>
<div class="t" style="left:1001.6px;top:583.50px;font-size:14.3px;line-height:14.3px;color:#0052cc;font-weight:400;-webkit-text-stroke:0.45px #0052cc;">admin</div>
<div class="t" style="left:1187.7px;top:583.50px;font-size:14.3px;line-height:14.3px;color:#0052cc;font-weight:400;-webkit-text-stroke:0.45px #0052cc;">admin</div>
<div class="t" style="left:1312.4px;top:583.83px;font-size:13.9px;line-height:13.9px;color:#172b4d;font-weight:400;">1/23/2024</div>
<div style="position:absolute;left:1421px;top:582px;width:18px;height:16px;background:#0052cc;border-radius:8px"></div>
<div class="t" style="left:1421px;top:583px;width:18px;height:16px;line-height:16px;text-align:center;font-size:12px;font-weight:400;-webkit-text-stroke:0.25px #fff;color:#fff">0</div>
<svg style="position:absolute;left:1511px;top:581px;" width="18" height="18" viewBox="0 0 18 18"><rect x="1.1" y="2" width="15.8" height="1.9" rx="0.7" fill="#42526e"/><rect x="6.3" y="0.8" width="5.5" height="2" rx="0.6" fill="#42526e"/><path d="M2.2,5.1 L16,5.1 L13.9,16.6 L4.2,16.6 Z" fill="#42526e"/></svg>
<svg style="position:absolute;left:1549px;top:580px;" width="6" height="20" viewBox="0 0 6 20"><circle cx="3" cy="3" r="2" fill="#42526e"/><circle cx="3" cy="10" r="2" fill="#42526e"/><circle cx="3" cy="17" r="2" fill="#42526e"/></svg>
<svg style="position:absolute;left:21px;top:643.5px;" width="18" height="17" viewBox="0 0 18 17"><path d="M9,1.3 L11.3,6.3 L16.6,6.9 L12.6,10.6 L13.8,15.8 L9,13.1 L4.2,15.8 L5.4,10.6 L1.4,6.9 L6.7,6.3 Z" fill="none" stroke="#bcbcbc" stroke-width="1.7" stroke-linejoin="round"/></svg>
<div class="t" style="left:113.5px;top:631.75px;font-size:14px;line-height:14px;color:#0052cc;font-weight:400;-webkit-text-stroke:0.45px #0052cc;">kanban</div>
<div class="t" style="left:111px;top:669.33px;font-size:10.6px;line-height:10.6px;color:#6b778c;font-weight:400;">kanban</div>
<div style="position:absolute;left:353px;top:642px;width:52.6px;height:20px;background:#f4f5f7;border-radius:3px"></div>
<div class="t" style="left:357.5px;top:645.06px;font-size:13.4px;line-height:13.4px;color:#172b4d;font-weight:400;letter-spacing:0px">kanban</div>
<div class="t" style="left:474px;top:646.30px;font-size:13.0px;line-height:13.0px;color:#172b4d;font-weight:400;letter-spacing:-0.6px">GLOBAL</div>
<div class="t" style="left:722px;top:645.50px;font-size:14.3px;line-height:14.3px;color:#0052cc;font-weight:400;-webkit-text-stroke:0.45px #0052cc;">admin</div>
<div class="t" style="left:831.5px;top:645.83px;font-size:13.9px;line-height:13.9px;color:#172b4d;font-weight:400;">1/23/2024</div>
<svg style="position:absolute;left:947px;top:636px;" width="32" height="32" viewBox="0 0 32 32"><circle cx="16" cy="16" r="16" fill="#00b8d9"/><ellipse cx="7.6" cy="9.4" rx="2.3" ry="3" transform="rotate(-20 7.6 9.4)" fill="#ff8b00"/><ellipse cx="24.4" cy="9.4" rx="2.3" ry="3" transform="rotate(20 24.4 9.4)" fill="#ff8b00"/><path d="M8.6,7 L23.4,7 L24.4,12.2 L24.4,21.4 L19.8,24.6 L18.1,27 L13.9,27 L12.2,24.6 L7.6,21.4 L7.6,12.2 Z" fill="#ffab00" stroke="#ffab00" stroke-width="0.6" stroke-linejoin="round"/><path d="M13.2,7.4 L18.8,7.4 L18.8,14.8 L20.9,15.6 L20.9,22.5 Q20.9,23.6 19.8,23.6 L12.2,23.6 Q11.1,23.6 11.1,22.5 L11.1,15.6 L13.2,14.8 Z" fill="#fff"/><circle cx="11.9" cy="11.9" r="0.95" fill="#344563"/><circle cx="20.1" cy="11.9" r="0.95" fill="#344563"/><ellipse cx="16" cy="20.3" rx="2.7" ry="1.5" fill="#344563"/><path d="M14.8,23.9 L17.2,23.9 L16,24.7 Z" fill="#344563"/></svg>
<svg style="position:absolute;left:1134px;top:636px;" width="32" height="32" viewBox="0 0 32 32"><circle cx="16" cy="16" r="16" fill="#00b8d9"/><ellipse cx="7.6" cy="9.4" rx="2.3" ry="3" transform="rotate(-20 7.6 9.4)" fill="#ff8b00"/><ellipse cx="24.4" cy="9.4" rx="2.3" ry="3" transform="rotate(20 24.4 9.4)" fill="#ff8b00"/><path d="M8.6,7 L23.4,7 L24.4,12.2 L24.4,21.4 L19.8,24.6 L18.1,27 L13.9,27 L12.2,24.6 L7.6,21.4 L7.6,12.2 Z" fill="#ffab00" stroke="#ffab00" stroke-width="0.6" stroke-linejoin="round"/><path d="M13.2,7.4 L18.8,7.4 L18.8,14.8 L20.9,15.6 L20.9,22.5 Q20.9,23.6 19.8,23.6 L12.2,23.6 Q11.1,23.6 11.1,22.5 L11.1,15.6 L13.2,14.8 Z" fill="#fff"/><circle cx="11.9" cy="11.9" r="0.95" fill="#344563"/><circle cx="20.1" cy="11.9" r="0.95" fill="#344563"/><ellipse cx="16" cy="20.3" rx="2.7" ry="1.5" fill="#344563"/><path d="M14.8,23.9 L17.2,23.9 L16,24.7 Z" fill="#344563"/></svg>
<div class="t" style="left:1001.6px;top:645.50px;font-size:14.3px;line-height:14.3px;color:#0052cc;font-weight:400;-webkit-text-stroke:0.45px #0052cc;">admin</div>
<div class="t" style="left:1187.7px;top:645.50px;font-size:14.3px;line-height:14.3px;color:#0052cc;font-weight:400;-webkit-text-stroke:0.45px #0052cc;">admin</div>
<div class="t" style="left:1312.4px;top:645.83px;font-size:13.9px;line-height:13.9px;color:#172b4d;font-weight:400;">1/23/2024</div>
<div style="position:absolute;left:1421px;top:644px;width:18px;height:16px;background:#0052cc;border-radius:8px"></div>
<div class="t" style="left:1421px;top:645px;width:18px;height:16px;line-height:16px;text-align:center;font-size:12px;font-weight:400;-webkit-text-stroke:0.25px #fff;color:#fff">0</div>
<svg style="position:absolute;left:1511px;top:643px;" width="18" height="18" viewBox="0 0 18 18"><rect x="1.1" y="2" width="15.8" height="1.9" rx="0.7" fill="#42526e"/><rect x="6.3" y="0.8" width="5.5" height="2" rx="0.6" fill="#42526e"/><path d="M2.2,5.1 L16,5.1 L13.9,16.6 L4.2,16.6 Z" fill="#42526e"/></svg>
<svg style="position:absolute;left:1549px;top:642px;" width="6" height="20" viewBox="0 0 6 20"><circle cx="3" cy="3" r="2" fill="#42526e"/><circle cx="3" cy="10" r="2" fill="#42526e"/><circle cx="3" cy="17" r="2" fill="#42526e"/></svg>
<svg style="position:absolute;left:21px;top:711.5px;" width="18" height="17" viewBox="0 0 18 17"><path d="M9,1.3 L11.3,6.3 L16.6,6.9 L12.6,10.6 L13.8,15.8 L9,13.1 L4.2,15.8 L5.4,10.6 L1.4,6.9 L6.7,6.3 Z" fill="none" stroke="#bcbcbc" stroke-width="1.7" stroke-linejoin="round"/></svg>
<svg style="position:absolute;left:66px;top:710px;" width="15" height="18" viewBox="0 0 15 18"><path d="M2.6,1.8 L2.6,15.5" stroke="#172b4d" stroke-width="2" stroke-linecap="round"/><path d="M2,1.5 Q7,0.8 13.3,1.6 L13.3,10.2 Q9,9.6 6,10.6 L2,10.6 Z" fill="#172b4d"/></svg>
<div class="t" style="left:113.5px;top:699.75px;font-size:14px;line-height:14px;color:#0052cc;font-weight:400;-webkit-text-stroke:0.45px #0052cc;">new test</div>
<div class="t" style="left:111px;top:737.33px;font-size:10.6px;line-height:10.6px;color:#6b778c;font-weight:400;">new test</div>
<div style="position:absolute;left:353px;top:710px;width:58.5px;height:20px;background:#f4f5f7;border-radius:3px"></div>
<div class="t" style="left:357.5px;top:713.06px;font-size:13.4px;line-height:13.4px;color:#172b4d;font-weight:400;letter-spacing:0px">new test</div>
<div class="t" style="left:474px;top:714.30px;font-size:13.0px;line-height:13.0px;color:#172b4d;font-weight:400;letter-spacing:-0.6px">GLOBAL</div>
<div class="t" style="left:722px;top:713.50px;font-size:14.3px;line-height:14.3px;color:#0052cc;font-weight:400;-webkit-text-stroke:0.45px #0052cc;">admin</div>
<div class="t" style="left:831.5px;top:713.83px;font-size:13.9px;line-height:13.9px;color:#172b4d;font-weight:400;">1/23/2024</div>
<svg style="position:absolute;left:947px;top:704px;" width="32" height="32" viewBox="0 0 32 32"><circle cx="16" cy="16" r="16" fill="#00b8d9"/><ellipse cx="7.6" cy="9.4" rx="2.3" ry="3" transform="rotate(-20 7.6 9.4)" fill="#ff8b00"/><ellipse cx="24.4" cy="9.4" rx="2.3" ry="3" transform="rotate(20 24.4 9.4)" fill="#ff8b00"/><path d="M8.6,7 L23.4,7 L24.4,12.2 L24.4,21.4 L19.8,24.6 L18.1,27 L13.9,27 L12.2,24.6 L7.6,21.4 L7.6,12.2 Z" fill="#ffab00" stroke="#ffab00" stroke-width="0.6" stroke-linejoin="round"/><path d="M13.2,7.4 L18.8,7.4 L18.8,14.8 L20.9,15.6 L20.9,22.5 Q20.9,23.6 19.8,23.6 L12.2,23.6 Q11.1,23.6 11.1,22.5 L11.1,15.6 L13.2,14.8 Z" fill="#fff"/><circle cx="11.9" cy="11.9" r="0.95" fill="#344563"/><circle cx="20.1" cy="11.9" r="0.95" fill="#344563"/><ellipse cx="16" cy="20.3" rx="2.7" ry="1.5" fill="#344563"/><path d="M14.8,23.9 L17.2,23.9 L16,24.7 Z" fill="#344563"/></svg>
<svg style="position:absolute;left:1134px;top:704px;" width="32" height="32" viewBox="0 0 32 32"><circle cx="16" cy="16" r="16" fill="#00b8d9"/><ellipse cx="7.6" cy="9.4" rx="2.3" ry="3" transform="rotate(-20 7.6 9.4)" fill="#ff8b00"/><ellipse cx="24.4" cy="9.4" rx="2.3" ry="3" transform="rotate(20 24.4 9.4)" fill="#ff8b00"/><path d="M8.6,7 L23.4,7 L24.4,12.2 L24.4,21.4 L19.8,24.6 L18.1,27 L13.9,27 L12.2,24.6 L7.6,21.4 L7.6,12.2 Z" fill="#ffab00" stroke="#ffab00" stroke-width="0.6" stroke-linejoin="round"/><path d="M13.2,7.4 L18.8,7.4 L18.8,14.8 L20.9,15.6 L20.9,22.5 Q20.9,23.6 19.8,23.6 L12.2,23.6 Q11.1,23.6 11.1,22.5 L11.1,15.6 L13.2,14.8 Z" fill="#fff"/><circle cx="11.9" cy="11.9" r="0.95" fill="#344563"/><circle cx="20.1" cy="11.9" r="0.95" fill="#344563"/><ellipse cx="16" cy="20.3" rx="2.7" ry="1.5" fill="#344563"/><path d="M14.8,23.9 L17.2,23.9 L16,24.7 Z" fill="#344563"/></svg>
<div class="t" style="left:1001.6px;top:713.50px;font-size:14.3px;line-height:14.3px;color:#0052cc;font-weight:400;-webkit-text-stroke:0.45px #0052cc;">admin</div>
<div class="t" style="left:1187.7px;top:713.50px;font-size:14.3px;line-height:14.3px;color:#0052cc;font-weight:400;-webkit-text-stroke:0.45px #0052cc;">admin</div>
<div class="t" style="left:1312.4px;top:713.83px;font-size:13.9px;line-height:13.9px;color:#172b4d;font-weight:400;">1/23/2024</div>
<div style="position:absolute;left:1421px;top:712px;width:18px;height:16px;background:#0052cc;border-radius:8px"></div>
<div class="t" style="left:1421px;top:713px;width:18px;height:16px;line-height:16px;text-align:center;font-size:12px;font-weight:400;-webkit-text-stroke:0.25px #fff;color:#fff">1</div>
<svg style="position:absolute;left:1511px;top:711px;" width="18" height="18" viewBox="0 0 18 18"><rect x="1.1" y="2" width="15.8" height="1.9" rx="0.7" fill="#42526e"/><rect x="6.3" y="0.8" width="5.5" height="2" rx="0.6" fill="#42526e"/><path d="M2.2,5.1 L16,5.1 L13.9,16.6 L4.2,16.6 Z" fill="#42526e"/></svg>
<svg style="position:absolute;left:1549px;top:710px;" width="6" height="20" viewBox="0 0 6 20"><circle cx="3" cy="3" r="2" fill="#42526e"/><circle cx="3" cy="10" r="2" fill="#42526e"/><circle cx="3" cy="17" r="2" fill="#42526e"/></svg>
<div style="position:absolute;left:583px;top:45px;width:160px;height:720px;background:#fff;border-radius:3px;box-shadow:0 4px 8px -2px rgba(9,30,66,0.25),0 0 1px rgba(9,30,66,0.31)"></div>
<div class="t" style="left:593.4px;top:58.23px;font-size:10.6px;line-height:10.6px;color:#5e6c84;font-weight:400;-webkit-text-stroke:0.35px #5e6c84;letter-spacing:-0.3px">HIERARCHIES</div>
<div class="t" style="left:593.3px;top:90.92px;font-size:13.8px;line-height:13.8px;color:#42526e;font-weight:400;">Apply Hierarchy</div>
<div class="t" style="left:593.3px;top:125.09px;font-size:13.6px;line-height:13.6px;color:#42526e;font-weight:400;">Create Hierarchy</div>
<div class="t" style="left:593.3px;top:159.09px;font-size:13.6px;line-height:13.6px;color:#42526e;font-weight:400;">Manage Hierarchies</div>
<div style="position:absolute;left:583px;top:183px;width:160px;height:1px;background:#dfe1e6"></div>
<div class="t" style="left:593.4px;top:197.03px;font-size:10.6px;line-height:10.6px;color:#5e6c84;font-weight:400;-webkit-text-stroke:0.35px #5e6c84;letter-spacing:-0.3px">TEMPLATES</div>
<div class="t" style="left:593.3px;top:229.89px;font-size:13.6px;line-height:13.6px;color:#42526e;font-weight:400;">Create Template</div>
<div class="t" style="left:593.3px;top:263.80px;font-size:13.7px;line-height:13.7px;color:#42526e;font-weight:400;">Manage Templates</div>
<div style="position:absolute;left:583px;top:288px;width:160px;height:1px;background:#dfe1e6"></div>
<div class="t" style="left:593.4px;top:302.03px;font-size:10.6px;line-height:10.6px;color:#5e6c84;font-weight:400;-webkit-text-stroke:0.35px #5e6c84;letter-spacing:-0.3px">SCOPES</div>
<div class="t" style="left:593.3px;top:335.14px;font-size:13.3px;line-height:13.3px;color:#42526e;font-weight:400;">Create Scope</div>
<div class="t" style="left:593.3px;top:368.97px;font-size:13.5px;line-height:13.5px;color:#42526e;font-weight:400;">Manage Scopes</div>
<div style="position:absolute;left:583px;top:393px;width:160px;height:1px;background:#dfe1e6"></div>
<div class="t" style="left:593.4px;top:407.03px;font-size:10.6px;line-height:10.6px;color:#5e6c84;font-weight:400;-webkit-text-stroke:0.35px #5e6c84;letter-spacing:-0.3px">VARIABLES</div>
<div class="t" style="left:593.3px;top:439.89px;font-size:13.6px;line-height:13.6px;color:#42526e;font-weight:400;">Create variable</div>
<div class="t" style="left:593.3px;top:473.80px;font-size:13.7px;line-height:13.7px;color:#42526e;font-weight:400;">Manage variables</div>
<div style="position:absolute;left:583px;top:498px;width:160px;height:1px;background:#dfe1e6"></div>
<div class="t" style="left:593.4px;top:512.03px;font-size:10.6px;line-height:10.6px;color:#5e6c84;font-weight:400;-webkit-text-stroke:0.35px #5e6c84;letter-spacing:-0.3px">TAGS</div>
<div class="t" style="left:593.3px;top:545.23px;font-size:13.2px;line-height:13.2px;color:#42526e;font-weight:400;">Create Tag</div>
<div class="t" style="left:593.3px;top:579.06px;font-size:13.4px;line-height:13.4px;color:#42526e;font-weight:400;">Manage Tags</div>
<div style="position:absolute;left:583px;top:603px;width:160px;height:1px;background:#dfe1e6"></div>
<div class="t" style="left:593.4px;top:617.03px;font-size:10.6px;line-height:10.6px;color:#5e6c84;font-weight:400;-webkit-text-stroke:0.35px #5e6c84;letter-spacing:-0.3px">CHECKLISTS</div>
<div class="t" style="left:593.3px;top:649.89px;font-size:13.6px;line-height:13.6px;color:#42526e;font-weight:400;">Manage Checklists</div>
<div style="position:absolute;left:583px;top:674px;width:160px;height:1px;background:#dfe1e6"></div>
<div class="t" style="left:593.4px;top:688.03px;font-size:10.6px;line-height:10.6px;color:#5e6c84;font-weight:400;-webkit-text-stroke:0.35px #5e6c84;letter-spacing:-0.3px">CONFIGURATIONS</div>
<div class="t" style="left:593.3px;top:721.23px;font-size:13.2px;line-height:13.2px;color:#42526e;font-weight:400;">Permissions</div>
<div style="position:absolute;left:583px;top:223px;width:159px;height:26px;border:3px solid #e0453a;box-sizing:border-box"></div>
</body></html>
